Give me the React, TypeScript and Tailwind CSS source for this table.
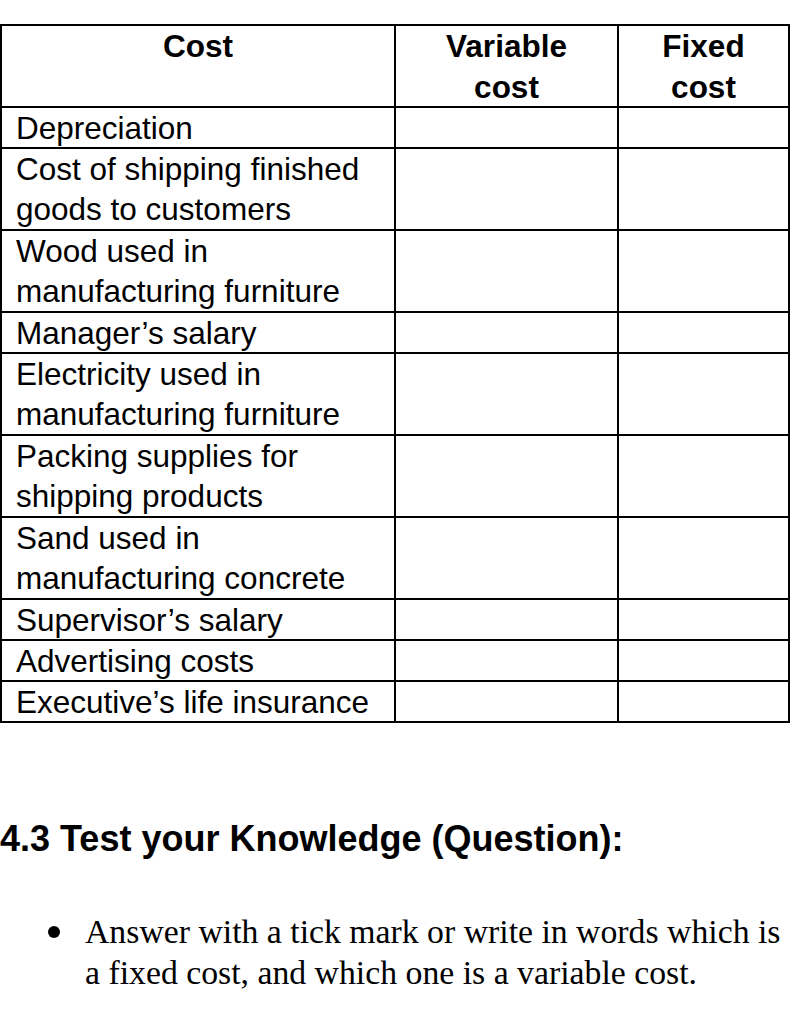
import React from "react";

type Row = { lines: string[] };

const rows: Row[] = [
  { lines: ["Depreciation"] },
  { lines: ["Cost of shipping finished", "goods to customers"] },
  { lines: ["Wood used in", "manufacturing furniture"] },
  { lines: ["Manager’s salary"] },
  { lines: ["Electricity used in", "manufacturing furniture"] },
  { lines: ["Packing supplies for", "shipping products"] },
  { lines: ["Sand used in", "manufacturing concrete"] },
  { lines: ["Supervisor’s salary"] },
  { lines: ["Advertising costs"] },
  { lines: ["Executive’s life insurance"] },
];

const cell = "border-2 border-black align-top p-0";

// single line cells: 39px inner, two line cells: 80px inner (plus borders = 41 / 82)
const Lines = ({ lines, className }: { lines: string[]; className?: string }) => (
  <div className={`${lines.length > 1 ? "h-[80px]" : "h-[39px]"} ${className ?? ""}`}>
    {lines.map((l, j) => (
      <div key={j} className="h-[41px] leading-[41px] -mt-[1px] first:mt-0">
        {l}
      </div>
    ))}
  </div>
);

export default function App() {
  return (
    <div className="w-[799px] min-h-[1024px] bg-white text-black">
      <div className="pt-[24px]">
        <table
          className="w-[790px] border-collapse text-[31.5px]"
          style={{ fontFamily: '"Liberation Sans", Arial, sans-serif' }}
        >
          <thead>
            <tr>
              <th className={`${cell} w-[394px] font-bold text-center`}>
                <div className="h-[80px] leading-[41px]">Cost</div>
              </th>
              <th className={`${cell} w-[223px] font-bold text-center`}>
                <div className="h-[80px] leading-[41px]">
                  Variable
                  <br />
                  cost
                </div>
              </th>
              <th className={`${cell} font-bold text-center`}>
                <div className="h-[80px] leading-[41px]">
                  Fixed
                  <br />
                  cost
                </div>
              </th>
            </tr>
          </thead>
          <tbody>
            {rows.map((row, i) => (
              <tr key={i}>
                <td className={`${cell} pl-[14px] whitespace-nowrap`}>
                  <Lines lines={row.lines} />
                </td>
                <td className={cell}></td>
                <td className={cell}></td>
              </tr>
            ))}
          </tbody>
        </table>
      </div>

      <h2
        className="mt-[96px] text-[36px] font-bold leading-[40px] whitespace-nowrap"
        style={{ fontFamily: '"Liberation Sans", Arial, sans-serif' }}
      >
        4.3 Test your Knowledge (Question):
      </h2>

      <ul
        className="mt-[52px] text-[33.75px] leading-[41px]"
        style={{ fontFamily: '"Liberation Serif", "Times New Roman", serif' }}
      >
        <li className="flex gap-[25px] pl-[48px]">
          <span className="mt-[15px] h-[12px] w-[12px] shrink-0 rounded-full bg-black"></span>
          <span className="whitespace-nowrap">
            Answer with a tick mark or write in words which is
            <br />
            a fixed cost, and which one is a variable cost.
          </span>
        </li>
      </ul>
    </div>
  );
}
